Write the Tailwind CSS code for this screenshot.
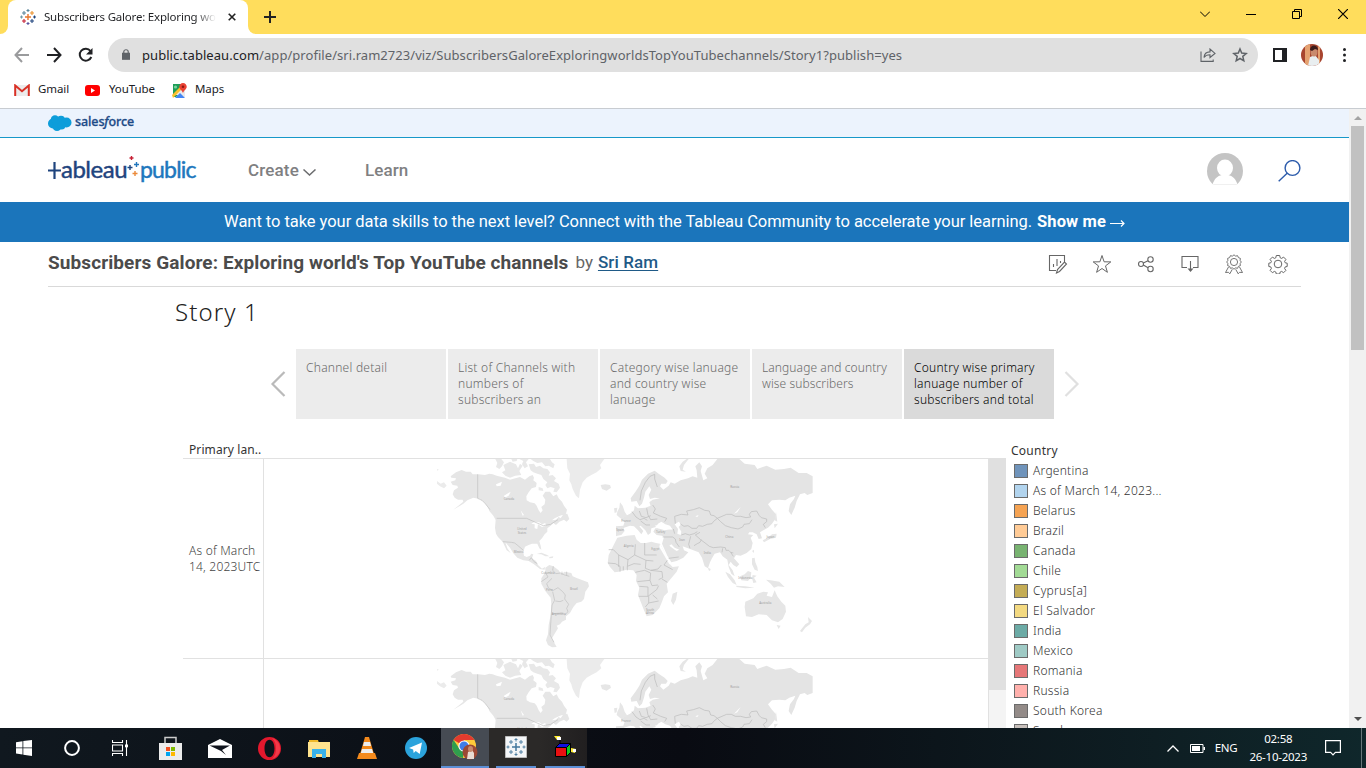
<!DOCTYPE html>
<html lang="en">
<head>
<meta charset="utf-8">
<title>Subscribers Galore: Exploring world's Top YouTube channels</title>
<script src="https://cdn.jsdelivr.net/npm/@tailwindcss/browser@4"></script>
</head>
<body class="w-[1366px] h-[768px] overflow-hidden flex flex-col bg-white font-['Noto_Sans',sans-serif] text-[#202124]">

<svg class="hidden" aria-hidden="true">
  <defs>
    <g id="world">
      <!-- Americas -->
      <g transform="translate(430 455) scale(.3333)">
        <path fill="#e6e6e6" d="M62 64L78 52 95 45 108 50 122 50 128 58 145 58 165 60 178 56 188 58 200 62 225 68 240 74 256 70 270 66 285 74 298 64 308 60 312 68 310 76 320 84 318 96 305 100 296 112 289 124 290 136 300 142 314 145 320 152 326 166 332 174 338 166 334 156 344 148 346 134 338 122 346 110 360 110 370 124 380 118 386 130 396 140 402 152 411 164 408 176 390 182 374 190 366 196 378 194 386 186 392 190 400 178 412 176 418 192 410 200 402 194 388 200 378 210 370 204 362 212 352 220 352 230 344 238 336 250 328 258 332 272 334 284 328 280 322 266 306 266 296 270 285 275 280 290 282 302 290 306 300 302 304 296 310 298 306 310 318 318 324 330 336 341 345 336 344 344 330 342 312 328 296 318 280 316 262 308 250 295 240 278 226 262 232 280 242 294 230 286 218 260 204 246 198 236 195 218 197 195 190 182 178 168 174 156 162 142 150 132 130 128 112 136 100 146 84 156 70 164 88 150 100 140 98 134 84 134 74 128 68 118 72 106 84 98 82 92 68 90 62 80 76 76 78 70 64 68Z"/>
        <path fill="#ebebeb" d="M21 78L32 86 42 82 50 92 42 100 30 94 21 86ZM21 42L27 44 21 47Z"/>
        <path fill="#e8e8e8" d="M196 12H214L222 22 216 34 208 42 198 36 202 24ZM220 30L240 20 258 28 264 40 270 26 278 32 268 48 274 60 256 62 240 68 226 62 216 52 226 46ZM244 12H262L260 18 248 20ZM268 12H296L288 22 294 34 284 40 276 28 280 18ZM296 28L312 26 318 36 330 32 340 40 352 42 360 52 356 62 368 60 378 70 372 78 386 86 390 98 380 112 370 110 374 100 362 96 352 100 346 90 352 82 340 72 334 60 322 56 310 52 302 46ZM302 12H360L366 22 374 28 370 40 356 32 346 34 336 22 322 24 310 18ZM326 96L338 100 340 108 326 106Z"/>
        <path fill="#ebebeb" d="M410 12H523L516 22 510 30 514 40 500 52 484 60 470 68 458 82 450 104 447 130 438 122 428 102 424 88 418 76 420 56 412 40Z"/>
        <path fill="#e6e6e6" d="M512 90L526 88 540 90 543 98 530 107 516 102ZM320 297L334 293 350 299 358 304 346 304 334 298ZM358 306L370 304 368 309 358 310ZM346 338L358 330 370 334 386 346 394 358 404 350 424 354 428 364 442 370 458 376 474 382 477 394 466 410 462 432 454 440 440 444 430 456 420 474 408 484 408 494 396 500 390 508 380 512 384 520 374 536 366 550 372 562 380 576 366 577 354 570 348 556 354 538 356 510 362 480 364 450 362 428 346 408 334 386 334 370 346 352Z"/>
        <path fill="#fff" d="M198 88L216 80 212 92 200 94ZM222 122L242 110 236 122 224 128ZM304 206L314 200 328 202 336 208 346 204 348 212 336 216 324 208 322 222 314 220 314 208ZM272 166L282 180 278 182Z"/>
        <path fill="none" stroke="#c0c0c0" stroke-width="2" d="M143 58V130L156 136 166 146 180 164M200 190H290L312 200 340 212 362 208 384 194M218 260L244 262 254 264 264 272 280 286M298 316L304 308 312 320 322 326M370 334L368 346 378 356 392 354 404 360 418 364M346 352L354 366 334 380M366 370L350 386 356 400 370 406 384 398 398 410 406 420 404 432 416 448 410 460 414 470 404 480M368 410L374 436 366 450 364 478 360 540 372 562M376 438L390 440 400 436M366 476L400 474M396 350V360M410 350V362"/>
        <g fill="#a0a0a0" font-family="Noto Sans,sans-serif" font-size="9" text-anchor="middle"><text x="237" y="136">Canada</text><text x="276" y="226">United</text><text x="276" y="236">States</text><text x="266" y="295">Mexico</text><text x="354" y="357">Colombia</text><text x="358" y="409">Peru</text><text x="432" y="405">Brazil</text><text x="386" y="480">Argentina</text></g>
      </g>
      <!-- Europe, Africa, Asia, Oceania -->
      <g transform="translate(620 455) scale(.3333)">
        <path fill="#e4e4e4" d="M34 140L32 130 48 108 58 92 66 74 84 56 104 47 118 58 134 68 143 78 138 86 124 86 120 94 130 104 146 92 152 82 164 86 182 76 204 70 218 64 232 68 230 46 226 34 238 22 246 34 242 48 250 76 262 70 254 56 262 40 278 30 292 12H358L374 26 404 30 412 42 440 32 466 44 492 42 512 38 536 54 560 54 578 64V114L562 120 554 114 540 118 530 138 524 158 514 180 506 168 510 148 522 132 526 122 508 128 496 136 478 134 456 136 444 148 456 164 468 178 466 192 456 206 444 218 430 226 420 232 426 250 416 252 410 238 398 232 388 232 384 238 400 240 392 248 398 264 394 282 380 294 362 302 348 300 342 310 358 328 350 336 340 330 332 320 326 330 338 346 344 364 334 356 326 336 322 314 308 304 300 292 284 296 276 310 270 322 264 340 254 334 246 308 236 292 220 286 204 280 188 274 192 286 205 292 190 308 170 318 154 322 142 302 132 280 126 266 132 246 126 242 110 240 100 230 106 220 130 220 158 224 150 212 136 208 124 200 114 206 108 216 94 220 92 234 84 240 76 226 62 212 58 214 70 228 64 238 54 226 42 214 30 212 12 218 2 234 -12 244 -12 214 10 212 14 200 2 192 18 182 30 176 42 166 44 152 54 160 76 158 92 152 88 142 98 134 120 130 104 128 90 132 86 120 94 104 88 94 76 110 72 128 66 146 58 154 50 138Z"/>
        <path fill="#e6e6e6" d="M-10 216L8 214 14 228 4 240 -12 243ZM-8 170L-10 180 4 192 22 182 14 170 8 152 0 142 -2 158ZM-18 160L-8 158 -10 172 -16 174Z"/>
        <path fill="#e6e6e6" d="M182 48L178 34 188 20 200 12H206L192 30 188 44 198 50ZM-8 248L20 242 44 240 50 254 62 264 78 264 94 260 108 264 120 266 130 284 140 306 150 328 158 336 177 334 170 350 150 374 140 386 144 412 132 424 126 440 118 460 98 480 80 484 72 466 62 440 54 420 58 398 48 378 50 360 40 346 20 344 -4 350 -16 352 -30 336 -37 324 -34 300 -20 272ZM158 416L172 410 168 434 160 450 153 438ZM264 338L272 342 270 348 266 346ZM396 288L402 284 402 294ZM396 310L404 308 406 322 412 336 414 348 404 344 396 328ZM456 238L470 236 468 248 450 252 432 262 428 256 444 248ZM462 208L474 206 464 220ZM468 170L472 200 464 196ZM316 350L330 358 344 376 350 390 338 384 324 366ZM348 392L376 394 404 398 376 400 350 396ZM360 364L374 358 384 348 394 352 392 368 384 378 364 376ZM398 360L410 362 402 368 410 382 400 384 396 370ZM438 374L452 376 478 380 494 396 474 394 462 398 452 386ZM376 440L400 430 412 416 430 410 444 412 440 422 456 426 464 406 472 424 484 440 496 452 498 470 488 492 474 502 456 496 440 480 416 478 396 486 378 484 374 456ZM470 510L482 512 476 522ZM564 486L576 498 570 508 556 518 546 532 540 528 556 508 566 502Z"/>
        <path fill="#fff" d="M164 208L176 200 184 208 176 216 184 230 182 240 172 236 174 222ZM104 212L124 208 146 212 156 222 134 226 114 220ZM148 272L164 284 170 288 178 284 164 278 154 268ZM236 180L232 186 226 184ZM342 176L362 156 352 172ZM120 266L154 326 148 328 118 276Z"/>
        <path fill="none" stroke="#bababa" stroke-width="2" stroke-linejoin="round" d="M60 136L64 108 76 82 90 64 104 58V72L112 96M166 206L164 184 184 178 204 180 200 168 220 164 238 158 254 166 268 168 272 180 282 182 292 190 280 200 276 206 262 208 248 214 236 212 230 220 216 220 204 212 192 214 180 206M292 190L306 184 320 178 334 178 346 184 362 184 378 188 392 186 388 178 394 170 410 168 418 182 424 188 440 192 440 200 430 208 436 218M292 190L302 200 316 212 334 218 354 222 368 216 372 208 388 206 396 194M240 232L226 240 242 254 258 266 268 274 280 278 302 276 316 278 318 286 326 286 332 292 340 294M184 240L196 236 208 240 222 236 232 230M210 280L206 268 212 244M222 272L232 266 240 262 244 254M128 246H158L166 252 168 262 178 276M160 222L164 236M36 170L48 186 60 194 72 190 82 196M80 160L84 180 92 194 112 192M58 168L64 184 78 188 92 182M98 150L106 162 100 174 122 184 140 190 134 200M62 198L78 210 90 210M-34 284L-20 284 -4 300 24 314 44 300 46 268M44 300L78 316 100 318M74 264V300H110M-4 300V336M24 314L22 334 42 326 62 328M-36 324L-14 326 0 334V350M10 334V346M22 334V346M78 316L76 340 92 346 114 342 124 330M46 352L74 346 92 354 90 376 52 380M92 346L126 350 128 368 116 374M90 376L96 392 114 390M58 394L84 396V424H56M84 424L110 404 116 392M86 424V444L76 456M86 444L116 438M98 420L112 432M142 316L132 330 158 344M126 372L142 382M308 280L306 292M332 292L340 304M146 310L176 306"/>
        <g fill="#a0a0a0" font-family="Noto Sans,sans-serif" font-size="9" text-anchor="middle"><text x="344" y="100">Russia</text><text x="328" y="250">China</text><text x="262" y="296">India</text><text x="186" y="258">Iran</text><text x="122" y="235">Turkey</text><text x="26" y="275">Algeria</text><text x="106" y="284">Egypt</text><text x="90" y="468">South</text><text x="90" y="478">Africa</text><text x="376" y="371">Indonesia</text><text x="451" y="248">Japan</text><text x="436" y="448">Australia</text><text x="0" y="229">Spain</text><text x="18" y="201">France</text></g>
      </g>
    </g>
  </defs>
</svg>

<!-- Tab strip -->
<header class="h-[34px] shrink-0 bg-[#ffdd5c] flex">
  <div class="w-2 bg-white"><div class="h-full bg-[#ffdd5c] rounded-br-lg"></div></div>
  <div class="w-60 bg-[#ffdd5c]"><div class="h-full bg-white rounded-t-lg flex items-center pl-3 pr-[12px]">
    <svg class="size-4 shrink-0" viewBox="0 0 16 16" fill="none" stroke-width="1.1"><path stroke="#e8762d" d="M8 5v6M5 8h6" stroke-width="1.400"/><path stroke="#5b879b" d="M8 0v3M6.500 1.500h3M4 2v4M2 4h4"/><path stroke="#eb912c" d="M12 2v4M10 4h4"/><path stroke="#c72035" d="M4 10v4M2 12h4"/><path stroke="#1f447e" d="M12 10v4M10 12h4M14.500 6.500v3M13 8h3"/><path stroke="#7099a6" d="M1.500 6.500v3M0 8h3"/><path stroke="#59569f" d="M8 13v3M6.500 14.500h3"/></svg>
    <span class="ml-2 w-[172px] overflow-hidden whitespace-nowrap text-[11.5px] tracking-[-0.2px] bg-linear-to-r from-[#202124] from-88% to-transparent bg-clip-text text-transparent">Subscribers Galore: Exploring world's</span>
    <svg class="ml-auto size-[8px]" viewBox="0 0 9 9"><path d="M.8.8l7.400 7.400M8.200.8L.8 8.200" stroke="#222" stroke-width="1.800"/></svg>
  </div></div>
  <div class="w-2 bg-white"><div class="h-full bg-[#ffdd5c] rounded-bl-lg"></div></div>
  <svg class="ml-2 mt-[11px] size-3" viewBox="0 0 12 12"><path d="M6 0v12M0 6h12" stroke="#222" stroke-width="2"/></svg>
  <div class="ml-auto flex items-center gap-9 h-7 pr-[18px] text-black">
    <svg class="size-[10px]" viewBox="0 0 10 10" fill="none" stroke="currentColor"><path d="M0 2.500l5 5 5-5"/></svg>
    <svg class="size-[10px]" viewBox="0 0 10 10" fill="none" stroke="currentColor"><path d="M0 5.500h10"/></svg>
    <svg class="size-[10px]" viewBox="0 0 10 10" fill="none" stroke="currentColor"><path d="M.5 2.500h7v7h-7zM2.500 2.500v-2h7v7h-2"/></svg>
    <svg class="size-[10px]" viewBox="0 0 10 10" fill="none" stroke="currentColor" stroke-width="1.200"><path d="M0 0l10 10M10 0L0 10"/></svg>
  </div>
</header>

<!-- Toolbar -->
<div class="h-[42px] shrink-0 flex items-center pl-[14px] pr-5">
  <svg class="w-[15px] h-4" viewBox="0 0 15 16" fill="none" stroke="#9a9b9d" stroke-width="2"><path d="M15 8H2M8 1L1.500 8 8 15"/></svg>
  <svg class="ml-[18px] w-[15px] h-4" viewBox="0 0 15 16" fill="none" stroke="#202124" stroke-width="2"><path d="M0 8h13M7 1l6.500 7L7 15"/></svg>
  <svg class="ml-4 w-[15px] h-4" viewBox="0 0 15 16" fill="none" stroke="#202124" stroke-width="2"><path d="M12.500 4A6 6 0 1 0 13.300 10"/><path d="M14.500 1v6.500H8z" fill="#202124" stroke="none"/></svg>
  <div class="ml-[15px] w-[1150px] h-[34px] rounded-full bg-[#e0e0e0] flex items-center pl-[14px] pr-[10px] text-[13px] text-[#5f6368]">
    <svg class="w-[8px] h-[11px] mb-0.5" viewBox="0 0 9 12"><path d="M0 4h9v8H0z" fill="#5f6368"/><path d="M2 4.500V3a2.500 2.300 0 0 1 5 0v1.500" fill="none" stroke="#5f6368" stroke-width="1.300"/></svg>
    <span class="ml-3 pt-px whitespace-nowrap tracking-[0.05px]"><span class="text-[#202124]">public.tableau.com</span>/app/profile/sri.ram2723/viz/SubscribersGaloreExploringworldsTopYouTubechannels/Story1?publish=yes</span>
    <svg class="ml-auto w-4 h-[14px]" viewBox="0 0 16 14" fill="none" stroke="#5f6368" stroke-width="1.100"><path d="M1 3.500v9.900h12.200v-2M4 9.500c.3-4 2.600-5.600 6-5.600V1l5 4.400-5 4.100V6.800c-3 0-4.700.6-6 2.700z"/></svg>
    <svg class="ml-4 size-4" viewBox="0 0 16 16" fill="none" stroke="#5f6368" stroke-width="1.500"><path d="M8 2l1.700 4.100 4.500.4-3.400 2.900 1 4.400L8 11.500l-3.800 2.300 1-4.400L1.800 6.500l4.500-.4z"/></svg>
  </div>
  <svg class="ml-[15px] size-[14px]" viewBox="0 0 14 14"><path d="M0 0h14v14H0z" fill="#202124"/><path d="M2 2h7v10H2z" fill="#fff"/></svg>
  <svg class="ml-[14px] size-[22px]" viewBox="0 0 22 22"><clipPath id="av"><circle cx="11" cy="11" r="11"/></clipPath><g clip-path="url(#av)"><path fill="#a8452f" d="M0 0h22v22H0z"/><path fill="#e5a271" d="M4 0h5v22H4zM17 0h2v22h-2z"/><path fill="#e9eef0" d="M7 22l2-9 5-2 4 5v6z"/><ellipse cx="13" cy="8" rx="3.500" ry="4.500" fill="#c98a6d"/><path fill="#3b1d1c" d="M9 6c0-6 8-6 8 0l-3-1-3 2z"/></g></svg>
  <svg class="ml-auto w-[3px] h-[14px]" viewBox="0 0 3 14" fill="#202124"><circle cx="1.500" cy="1.500" r="1.500"/><circle cx="1.500" cy="7" r="1.500"/><circle cx="1.500" cy="12.500" r="1.500"/></svg>
</div>

<!-- Bookmarks -->
<div class="h-[33px] shrink-0 border-b border-[#c8ccd1] flex items-center pl-[14px] pb-[4px] text-[11.5px] tracking-[-0.1px]">
  <svg class="w-4 h-3" viewBox="0 0 16 12"><path fill="#ececec" d="M2 1h12v11H2z"/><path fill="none" stroke="#d93025" stroke-width="2" d="M1.200 12V1.500L8 7.300l6.800-5.800V12"/></svg>
  <span class="ml-2 w-[47px] -mt-0.5">Gmail</span>
  <svg class="w-[15px] h-[11px]" viewBox="0 0 15 11"><rect width="15" height="11" rx="3" fill="#f00"/><path d="M6 3l4 2.500L6 8z" fill="#fff"/></svg>
  <span class="ml-[9px] w-[63px] -mt-0.5">YouTube</span>
  <svg class="size-[15px]" viewBox="0 0 15 15"><path fill="#1e9e58" d="M1 1h11v6L4 14H1z"/><path fill="#e8eaed" d="M1 12l9-9 3 4v7H9L7 12z"/><path fill="#4285f4" d="M3 15l5-5 5 5z"/><path fill="#fbc02d" d="M0 12l8-8 2 2-9 9z"/><circle cx="3.500" cy="4" r="1.600" fill="#7bd39f"/><path fill="#ea4335" d="M11 0a3.700 3.700 0 0 1 3.700 4c0 2-2.500 3-3.700 6-1.200-3-3.700-4-3.700-6A3.700 3.700 0 0 1 11 0z"/><circle cx="11" cy="3.800" r="1.300" fill="#8b1a12"/></svg>
  <span class="ml-2 -mt-0.5">Maps</span>
</div>

<!-- Page -->
<div class="h-[619px] shrink-0 flex">
  <main class="w-[1349px] h-full overflow-hidden flex flex-col">
    <div class="h-[29px] shrink-0 bg-[#ecf3fd] border-b border-[#1798c9] flex items-center pl-12 pb-px">
      <svg class="w-6 h-4" viewBox="0 0 24 16" fill="#0d9dda"><circle cx="5" cy="8.500" r="5"/><circle cx="7" cy="4.500" r="4.200"/><circle cx="13" cy="4.800" r="4"/><circle cx="18.500" cy="7.500" r="5"/><circle cx="9" cy="11.500" r="4.500"/><circle cx="13.500" cy="10.500" r="4"/></svg>
      <span class="ml-[3px] text-[12.500px] tracking-[-0.1px] font-medium text-[#1c4a87] [-webkit-text-stroke:0.3px]">sales<i>f</i>orce</span>
    </div>
    <nav class="h-16 shrink-0 flex items-center pl-12 pr-12 font-['Roboto',sans-serif] text-[17px] font-medium text-[#7f8082]">
      <div class="flex items-center h-8 w-[149px] font-['Lato',sans-serif] text-[24px] leading-8 font-normal whitespace-nowrap [-webkit-text-stroke:0.45px]">
        <svg class="w-[13px] h-[17px] text-[#1f447e] shrink-0" viewBox="0 0 13 17" fill="none" stroke="currentColor" stroke-width="2.200"><path d="M6.500 0v17M0 8.500h13"/></svg>
        <span class="w-[66px] -mt-0.5 text-[#1f447e] tracking-[-0.5px]">ableau</span>
        <svg class="w-[12px] h-6 shrink-0 self-start" viewBox="0 0 12 24" fill="none" stroke-width="1.400"><path stroke="#c72035" d="M4.500 2v4M2.500 4h4"/><path stroke="#1f447e" d="M3 11v5M.5 13.500h5"/><path stroke="#2277bd" d="M9.500 8v5M7 10.500h5"/><path stroke="#eb8a3a" d="M8 17v5M5.500 19.500h5"/></svg>
        <span class="ml-px -mt-0.5 text-[#2077bd] text-[23px] tracking-[-0.8px]">public</span>
      </div>
      <span class="ml-[51px] pt-0.5 tracking-[0.15px]">Create</span>
      <svg class="ml-1 mt-1 w-[13px] h-[7px]" viewBox="0 0 13 7" fill="none" stroke="#6c6d6f" stroke-width="1.500"><path d="M.5.5l6 5.500 6-5.500"/></svg>
      <span class="ml-[49px] pt-0.5 tracking-[0.1px]">Learn</span>
      <svg class="ml-auto mt-0.5 size-9" viewBox="0 0 36 36"><clipPath id="pf"><path d="M0 0h36v31.500H0z"/></clipPath><g clip-path="url(#pf)"><circle cx="18" cy="18" r="18" fill="#c4c4c4"/><ellipse cx="18" cy="15" rx="8" ry="8.500" fill="#fff"/><path fill="#fff" d="M5 33c2-7 5-10 10-11h6c5 1 8 4 10 11z"/></g></svg>
      <svg class="ml-[35px] mt-0.5 w-[23px] h-[22px]" viewBox="0 0 23 22" fill="none" stroke="#2c5bab" stroke-width="1.400"><circle cx="14.500" cy="8" r="7.400"/><path d="M9.400 13L.7 21.300"/></svg>
    </nav>
    <div class="h-10 shrink-0 bg-[#1b75bb] text-white flex items-center justify-center font-['Roboto',sans-serif] text-[16.500px] tracking-[-0.045px] whitespace-nowrap pt-px">
      <span>Want to take your data skills to the next level? Connect with the Tableau Community to accelerate your learning.</span>
      <b class="ml-[5px] font-bold text-[16.500px] tracking-[0.1px]">Show me</b>
      <svg class="ml-1 mt-0.5 w-[15px] h-[7px]" viewBox="0 0 15 7" fill="none" stroke="currentColor" stroke-width="1.200"><path d="M0 3.500h14M11 .5l3 3-3 3"/></svg>
    </div>
    <div class="h-[45px] shrink-0 mx-12 border-b border-[#d9d9d9] flex items-center pr-[13px] font-['Roboto',sans-serif] whitespace-nowrap">
      <h1 class="-mt-0.5 text-[19px] font-bold tracking-[0.095px] text-[#4b4b4b]">Subscribers Galore: Exploring world's Top YouTube channels</h1>
      <span class="-mt-0.5 ml-[7px] text-[17px] text-[#666]">by</span>
      <a class="-mt-0.5 ml-[5px] text-[17px] font-medium tracking-[0.1px] text-[#1f5a87] underline underline-offset-2">Sri Ram</a>
      <div class="ml-auto flex items-center gap-6 text-[#666]">
        <svg class="size-5" viewBox="0 0 20 20" fill="none" stroke="currentColor" stroke-width="1.100"><path d="M8 16.500H1.500v-15h15V8M5.500 13v-3M9 12V5M12.500 9V7M8.500 19l1-3.500L16.500 8l2 2-7 7.500z"/></svg>
        <svg class="size-5" viewBox="0 0 20 20" fill="none" stroke="currentColor"><path d="M10 1.500l2.100 6.300 6.700.1-5.300 4 1.900 6.400L10 14.500l-5.400 3.800 1.900-6.400-5.300-4 6.700-.1z"/></svg>
        <svg class="size-5" viewBox="0 0 20 20" fill="none" stroke="currentColor" stroke-width="1.100"><circle cx="5" cy="10" r="2.500"/><circle cx="14.500" cy="5.500" r="2.700"/><circle cx="14.500" cy="15" r="2.700"/><path d="M7.300 9l4.700-2.300M7.300 11l4.800 2.700"/></svg>
        <svg class="size-5" viewBox="0 0 20 20" fill="none" stroke="currentColor" stroke-width="1.100"><path d="M7 13.500H2v-11h16v11h-5M10.500 7v10"/><path d="M7.500 14.500h6l-3 3.500z" fill="currentColor" stroke="none"/></svg>
        <svg class="size-5" viewBox="0 0 20 20" fill="none" stroke="currentColor" stroke-width=".9" stroke-linejoin="round"><circle cx="10" cy="8" r="3.600"/><path d="M10 .8l1.600 1.300 2-.4.8 1.900 2 .8-.3 2L17.300 8l-1.200 1.600.3 2-2 .8-.8 1.900-2-.4L10 15.200l-1.600-1.300-2 .4-.8-1.900-2-.8.3-2L2.700 8l1.200-1.600-.3-2 2-.8.8-1.900 2 .4zM4.500 13l-3 5.500 3-.2 1.300 1.500 2.500-4.500M15.500 13l3 5.500-3-.2-1.300 1.500-2.500-4.500"/></svg>
        <svg class="size-5" viewBox="0 0 20 20" fill="none" stroke="currentColor" stroke-linejoin="round"><circle cx="10" cy="10" r="3.800"/><path d="M8.300 1.500h3.400l.5 2.300 1.400.6 2-1.300 2.300 2.300-1.300 2 .6 1.400 2 .4v3.300l-2 .4-.6 1.500 1.300 2-2.300 2.300-2-1.300-1.400.6-.5 2H8.300l-.5-2-1.400-.6-2 1.300-2.300-2.300 1.300-2-.6-1.500-2-.4V9.200l2-.4.6-1.400-1.300-2 2.300-2.300 2 1.300 1.400-.6z"/></svg>
      </div>
    </div>

    <section class="pt-[8px] pl-[175px] text-xs">
      <h2 class="h-[34px] leading-[34px] text-[24px] font-light tracking-[1.1px] text-[#222]">Story 1</h2>
      <div class="mt-5 h-[70px] ml-[95px] flex items-center leading-4 font-light tracking-[0.25px] text-[#6a6a6a]">
        <svg class="w-4 h-7 mr-[10px] shrink-0" viewBox="0 0 16 28" fill="none" stroke="#bababa" stroke-width="2.200"><path d="M14.500 2L2.500 14l12 12"/></svg>
        <div class="flex gap-0.5 h-[70px] shrink-0">
          <div class="w-[150px] bg-[#ececec] pl-[10px] pt-[11px]">Channel detail</div>
          <div class="w-[150px] bg-[#ececec] pl-[10px] pt-[11px]">List of Channels with<br>numbers of<br>subscribers an</div>
          <div class="w-[150px] bg-[#ececec] pl-[10px] pt-[11px] whitespace-nowrap">Category wise lanuage<br>and country wise<br>lanuage</div>
          <div class="w-[150px] bg-[#ececec] pl-[10px] pt-[11px] tracking-[0.1px]">Language and country<br>wise subscribers</div>
          <div class="w-[150px] bg-[#dadada] pl-[10px] pt-[11px] text-black">Country wise primary<br>lanuage number of<br>subscribers and total</div>
        </div>
        <svg class="w-4 h-7 ml-[10px] shrink-0" viewBox="0 0 16 28" fill="none" stroke="#e0e0e0" stroke-width="2.200"><path d="M1.500 2l12 12-12 12"/></svg>
      </div>
      <div class="ml-2 mt-[23px] flex">
        <div class="w-[805px]">
          <div class="h-4 leading-4 pl-[6px] text-[#333] tracking-[0.1px]">Primary lan..</div>
          <div class="w-[806px] border-t border-[#e1e1e1]">
            <div class="h-[200px] flex border-b border-[#e1e1e1]">
              <div class="w-[81px] border-r border-[#e1e1e1] flex items-center pl-[6px] leading-4 font-light tracking-[0.2px] text-[#444] whitespace-nowrap">As of March<br>14, 2023UTC</div>
              <svg class="w-[724px] h-[199px]" viewBox="264 459 724 199"><use href="#world"/></svg>
            </div>
            <div class="h-[200px] flex">
              <div class="w-[81px] border-r border-[#e1e1e1]"></div>
              <svg class="w-[724px] h-[199px]" viewBox="264 459 724 199"><use href="#world"/></svg>
            </div>
          </div>
        </div>
        <div class="w-[18px] mt-4 bg-[#f4f4f4] border-l border-[#e1e1e1]"><div class="h-[232px] bg-[#e0e0e0]"></div></div>
        <div class="ml-[5px] font-light tracking-[0.25px] text-[#333] whitespace-nowrap">
          <div class="h-5 leading-5 -mt-px font-normal">Country</div>
          <ul class="pl-[3px] leading-5 [&>li]:flex [&>li]:items-center [&>li]:gap-[5px] [&>li]:h-5 [&_i]:size-[14px] [&_i]:border [&_i]:border-[#6b6b6b]">
            <li><i class="bg-[#7094bb]"></i>Argentina</li>
            <li><i class="bg-[#b2d4ee]"></i>As of March 14, 2023...</li>
            <li><i class="bg-[#f5a353]"></i>Belarus</li>
            <li><i class="bg-[#ffcb96]"></i>Brazil</li>
            <li><i class="bg-[#78b371]"></i>Canada</li>
            <li><i class="bg-[#a2da95]"></i>Chile</li>
            <li><i class="bg-[#c4ac55]"></i>Cyprus[a]</li>
            <li><i class="bg-[#f3d981]"></i>El Salvador</li>
            <li><i class="bg-[#6caba6]"></i>India</li>
            <li><i class="bg-[#9fcac5]"></i>Mexico</li>
            <li><i class="bg-[#e67778]"></i>Romania</li>
            <li><i class="bg-[#ffb0ac]"></i>Russia</li>
            <li><i class="bg-[#938b88]"></i>South Korea</li>
            <li><i class="bg-[#c7bfbb]"></i>Sweden</li>
          </ul>
        </div>
      </div>
    </section>
  </main>
  <aside class="w-[17px] bg-[#f1f1f1] flex flex-col items-center">
    <svg class="w-2 h-[17px]" viewBox="0 0 8 17"><path d="M0 11l4-4 4 4z" fill="#a3a3a3"/></svg>
    <div class="w-[13px] h-[224px] bg-[#c1c1c1]"></div>
    <svg class="mt-auto w-2 h-[17px]" viewBox="0 0 8 17"><path d="M0 6l4 4 4-4z" fill="#505050"/></svg>
  </aside>
</div>

<!-- Taskbar -->
<footer class="h-10 shrink-0 flex items-center bg-linear-to-r from-[#10181f] via-[#090b12] to-[#0f272b] text-white">
  <div class="w-12 flex justify-center"><svg class="size-4" viewBox="0 0 16 16" fill="#fff"><path d="M0 2.200l6.500-1v6.300H0zM7.300 1.100L16 0v7.500H7.300zM0 8.300h6.500v6.300l-6.500-1zM7.300 8.300H16V16l-8.700-1.200z"/></svg></div>
  <div class="w-12 flex justify-center"><svg class="size-4" viewBox="0 0 16 16" fill="none" stroke="#fff" stroke-width="2"><circle cx="8" cy="8" r="6.900"/></svg></div>
  <div class="w-12 flex justify-center"><svg class="size-4" viewBox="0 0 16 16" fill="none" stroke="#fff" stroke-width="1.100"><path d="M.5 0v2.500h10V0M.5 16v-2.500h10V16M.5 5h10v6H.5zM14.500 0v16"/><path d="M13 4.500h3v2.800h-3z" fill="#fff" stroke="none"/></svg></div>
  <div class="w-[53px] flex justify-center"><svg class="w-[23px] h-6" viewBox="0 0 23 24"><path d="M6 8V1.500h11V8" fill="none" stroke="#ccc" stroke-width="1.500"/><path fill="#ececec" d="M0 7h23v17H0z"/><path fill="#f25022" d="M7 11h4v4H7z"/><path fill="#7fba00" d="M12 11h4v4h-4z"/><path fill="#00a4ef" d="M7 16h4v4H7z"/><path fill="#ffb900" d="M12 16h4v4h-4z"/></svg></div>
  <div class="w-[46px] flex justify-center"><svg class="w-6 h-[19px]" viewBox="0 0 24 19"><path fill="#fff" d="M0 6l12-6 12 6v13H0z"/><path fill="#10141d" d="M1.500 6.500H22l-8 4.500 4 5-5-4z"/></svg></div>
  <div class="w-[52px] flex justify-center"><svg class="size-[23px]" viewBox="0 0 23 23"><path fill="#e3182d" fill-rule="evenodd" d="M11.500 0a11.500 11.500 0 1 0 0 23 11.500 11.500 0 0 0 0-23zm0 2.800c3.200 0 5 4 5 8.700s-1.800 8.700-5 8.700-5-4-5-8.700 1.800-8.700 5-8.700z"/><path fill="#ff5a63" d="M14 1c5 2 8 5 8 10.500S19 20 14 22c3-3 4-6 4-10.500S17 4 14 1z" opacity=".5"/></svg></div>
  <div class="w-[47px] flex justify-center"><svg class="w-[22px] h-[19px]" viewBox="0 0 22 19"><path fill="#f0b829" d="M1 1h9l1 3H1z"/><path fill="#ffe38e" d="M0 3h22v15H0z"/><path fill="#39b2ea" d="M4 10h14v9h-4v-4H8v4H4z"/></svg></div>
  <div class="w-[49px] flex justify-center"><svg class="w-5 h-6" viewBox="0 0 20 24"><path fill="#f48a1c" d="M8 1h4l5 17H3z"/><path fill="#eee" d="M7 6h6l1 4H6zM5 13h10l1.200 4H3.800z"/><path fill="#f48a1c" d="M2 17h16l2 6H0z"/></svg></div>
  <div class="w-[50px] flex justify-center"><svg class="size-[22px]" viewBox="0 0 22 22"><circle cx="11" cy="11" r="11" fill="#2ba3dc"/><path fill="#fff" d="M4 11l13-5.500-2.300 11.500-4-3-2 2-.6-3.500z"/></svg></div>
  <div class="w-12 h-10 bg-[#464b53] border-b-2 border-[#5c8fd6] flex items-center justify-center"><svg class="w-[26px] h-[26px]" viewBox="0 0 26 26"><circle cx="12" cy="12" r="12" fill="#ffcb3a"/><path fill="#e33b2e" d="M12 12L1.600 6A12 12 0 0 1 22.400 6H12z"/><path fill="#2f9e4d" d="M12 12l-1 12A12 12 0 0 1 1.600 6l6 9z"/><circle cx="12" cy="12" r="5.600" fill="#fff"/><circle cx="12" cy="12" r="4.500" fill="#3f7de8"/><circle cx="18" cy="18" r="7.500" fill="#9c4934"/><path fill="#e9dcd2" d="M15 25l1-7 4-2 2 3v6z"/><ellipse cx="18.500" cy="15" rx="2.500" ry="3" fill="#c98a6d"/></svg></div>
  <div class="w-[49px] h-10 bg-[#2b2928] flex justify-center"><div class="w-10 h-10 border-b-2 border-[#5c8fd6] flex items-center justify-center ml-1"><svg class="size-[22px]" viewBox="0 0 22 22"><path fill="#f4f6f8" stroke="#bbb" d="M.5.5h21v21H.5z"/><g stroke="#43779c" stroke-width=".9"><path d="M11 7v8M7 11h8" stroke-width="1.500"/><path d="M6 4v4M4 6h4M16 4v4M14 6h4M6 14v4M4 16h4M16 14v4M14 16h4M11 2v3.500M9.500 3.500h3M11 16.500V20M9.500 18.500h3M3 9.500v3M1.500 11h3M19 9.500v3M17.500 11h3"/></g></svg></div></div>
  <div class="w-[49px] h-10 bg-linear-to-r from-[#2b2928] to-[#211f20] flex justify-center"><div class="w-10 h-10 border-b-2 border-[#5c8fd6] flex items-center justify-center ml-1"><svg class="w-6 h-6" viewBox="0 0 24 24" stroke="#000"><path fill="#e81010" d="M2.500 12.500h11v9h-11z"/><path fill="#1010e0" d="M2.500 12.500l4-4h11l-4 4z"/><path fill="#10c820" d="M13.500 12.500l4-4v9l-4 4z"/><path d="M7 9V4"/><path fill="#ffee33" stroke="none" d="M1 1l6 0 1 4-4 0zM18 13l5 1-1 4-4-1z"/><path fill="#fff" stroke="none" d="M4 2h4v3H4zM20 14h3v3h-3z"/></svg></div></div>
  <div class="ml-auto flex items-center text-[11.500px] leading-[18px] tracking-[-0.25px]">
    <svg class="w-3 h-[7px]" viewBox="0 0 12 7" fill="none" stroke="#fff" stroke-width="1.300"><path d="M.5 6.500L6 1l5.500 5.500"/></svg>
    <svg class="ml-[11px] w-[15px] h-[9px]" viewBox="0 0 15 9"><path d="M.5.5h12.500v8H.5z" fill="none" stroke="#fff"/><path d="M2 2h8v5H2zM13.500 3H15v3h-1.500z" fill="#fff"/></svg>
    <span class="ml-[10px]">ENG</span>
    <div class="ml-[12px] text-center"><div>02:58</div><div>26-10-2023</div></div>
    <svg class="ml-[18px] w-4 h-4" viewBox="0 0 16 16" fill="none" stroke="#fff" stroke-width="1.200"><path d="M.6.600h14.800v11.800h-5L8 14.800 5.600 12.400h-5z"/></svg>
    <div class="ml-5 w-px h-10 bg-[#66777a] mr-1"></div>
  </div>
</footer>
</body>
</html>
